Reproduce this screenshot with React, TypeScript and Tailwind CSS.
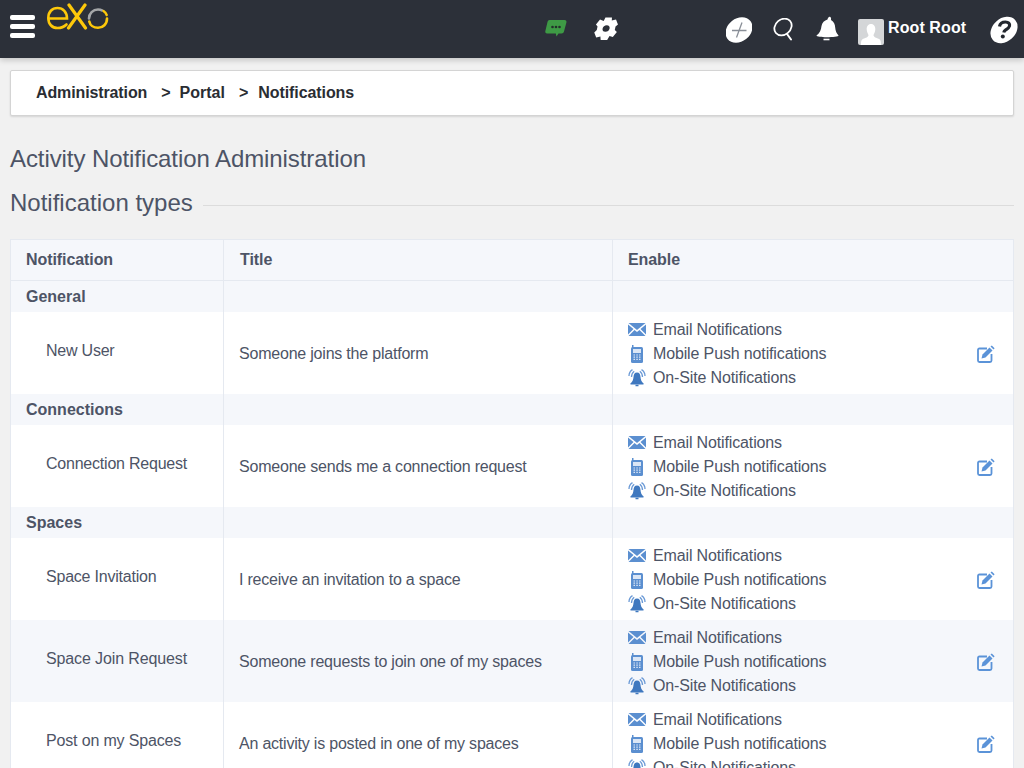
import React from "react";

const Logo = () => (
  <svg width="62" height="28" viewBox="0 0 62 28" fill="none" className="block">
    <path d="M1.500 15.500H20C20 9 16 5 10.500 5C5 5 1.300 9 1.300 15C1.300 21 5 25 10.500 25C14 25 17 24 19.500 21.500" stroke="#fdc80a" strokeWidth="2.600" strokeLinecap="round" />
    <path d="M22 2L38.500 25M38 2L21.500 25" stroke="#fdc80a" strokeWidth="3.200" strokeLinecap="round" />
    <path d="M60 15.500C60 21 56 24.800 51 24.800C46.500 24.800 43 22 42.300 18.500" stroke="#fdc80a" strokeWidth="2.600" strokeLinecap="round" />
    <path d="M42 15.500C42 10.500 46 6.500 51 6.500C52.500 6.500 54 6.800 55 7.400" stroke="#a4a6a8" strokeWidth="2.600" strokeLinecap="round" />
    <path d="M56.500 8C58 9 59.200 10.500 59.700 12" stroke="#fdc80a" strokeWidth="2.400" strokeLinecap="round" />
  </svg>
);

const Hamburger = () => (
  <div className="flex flex-col gap-[4px] w-[25px]">
    <div className="h-[5px] rounded-[2px] bg-white" />
    <div className="h-[5px] rounded-[2px] bg-white" />
    <div className="h-[5px] rounded-[2px] bg-white" />
  </div>
);

const Chat = () => (
  <svg width="22" height="19" viewBox="0 0 22 19" className="block">
    <path d="M4.500 1H19.500C21 1 21.800 2 21.400 3.500L19 12.500C18.700 13.700 17.800 14.500 16.500 14.500H13.500L11.500 17.500L10.800 14.500H2C0.800 14.500 0 13.500 0.300 12.300L2.500 3C2.800 1.800 3.500 1 4.500 1Z" fill="#3e9a45" />
    <circle cx="7.500" cy="8" r="1.300" fill="#22302a" />
    <circle cx="11" cy="8" r="1.300" fill="#22302a" />
    <circle cx="14.500" cy="8" r="1.300" fill="#22302a" />
  </svg>
);

const Gear = () => (
  <svg width="24" height="24" viewBox="0 0 24 24" className="block">
    <g transform="translate(12 12) skewX(-12)">
      <path
        fill="#fff"
        fillRule="evenodd"
        d="M-3 -11.500H3.500L4 -8.500L8 -9.500L11 -4.500L9 -2.500L9 1L11.500 3L8.500 8L5 7L3.500 11H-3L-4 7.500L-8 8.500L-11 3.500L-9 1L-9 -2.500L-11 -4.500L-8 -9.500L-4 -8ZM0 -3.800C-2.200 -3.800 -3.500 -2.200 -3.500 -.5C-3.500 1.500 -2.200 2.800 0 2.800C2.200 2.800 3.500 1.500 3.500 -.5C3.500 -2.200 2.200 -3.800 0 -3.800Z"
      />
    </g>
  </svg>
);

const Plus = () => (
  <svg width="26" height="26" viewBox="0 0 26 26" className="block">
    <ellipse cx="13" cy="13" rx="14.500" ry="11.500" transform="rotate(-38 13 13)" fill="#fff" />
    <path d="M16 5.500L10.500 20.500M6 13.500H20.500" stroke="#8a8f98" strokeWidth="1.300" />
  </svg>
);

const Search = () => (
  <svg width="22" height="24" viewBox="0 0 22 24" fill="none" className="block">
    <ellipse cx="10" cy="9" rx="9.300" ry="7.600" transform="rotate(-40 10 9)" stroke="#fff" strokeWidth="1.800" />
    <path d="M14 16L18 21.500" stroke="#fff" strokeWidth="2" strokeLinecap="round" />
  </svg>
);

const Bell = () => (
  <svg width="24" height="26" viewBox="0 0 24 26" className="block">
    <path d="M0.500 19.500C4 17 5 14 5.500 10C6 6.500 8.500 4.500 11.500 3.500C12 1.500 13 .5 14 .8C15 1.100 15.300 2.500 15 4C18 6 19 8 19.200 11.500C19.400 14.500 20.500 17.500 22.500 19.500C23 21.500 0.500 22 0.500 19.500Z" fill="#fff" />
    <path d="M7.500 23.500H13.500" stroke="#fff" strokeWidth="1.600" />
  </svg>
);

const Avatar = () => (
  <div className="w-[26px] h-[26px] rounded-[2px] bg-[#d4d6d8] overflow-hidden">
    <svg width="26" height="26" viewBox="0 0 26 26" className="block">
      <path d="M13 5C16 5 17.500 7.500 17.300 10.500C17.200 13 16 15 15.500 16C15.500 18 18.500 19 21 20C22.500 20.700 23 22 23 26H3C3 22 3.500 20.700 5 20C7.500 19 10.500 18 10.500 16C10 15 8.800 13 8.700 10.500C8.500 7.500 10 5 13 5Z" fill="#fff" />
    </svg>
  </div>
);

const Help = () => (
  <svg width="28" height="28" viewBox="0 0 28 28" className="block">
    <ellipse cx="14" cy="14" rx="15" ry="11.500" transform="rotate(-42 14 14)" fill="#fff" />
    <path d="M9.500 10.500C10 7.500 12.500 6 15.500 6C18.500 6 20 7.800 19.500 10C19 12 17 13 15.500 14C14.500 14.700 14 15.500 13.800 16.500" fill="none" stroke="#23272e" strokeWidth="3.200" />
    <circle cx="12.800" cy="20.500" r="2" fill="#23272e" />
  </svg>
);

const Mail = () => (
  <svg width="18" height="13" viewBox="0 0 18 13" className="block">
    <path d="M0.500 0H17.500L9 7Z" fill="#5b8fd0" />
    <path d="M0 1.500L5.500 6L0 11.500ZM18 1.500L12.500 6L18 11.500ZM6.500 7L9 9L11.500 7L17.500 13H0.500Z" fill="#5b8fd0" />
  </svg>
);

const Phone = () => (
  <svg width="12" height="18" viewBox="0 0 12 18" className="block">
    <rect x="0" y="2" width="12" height="16" rx="1.500" fill="#5b8fd0" />
    <rect x="1" y="0" width="1.500" height="3" fill="#5b8fd0" />
    <rect x="2" y="4" width="8" height="4" fill="#dbe6f5" />
    <path d="M2.500 10H4M5.300 10H6.800M8 10H9.500M2.500 12.200H4M5.300 12.200H6.800M8 12.200H9.500M2.500 14.400H4M5.300 14.400H6.800M8 14.400H9.500" stroke="#dbe6f5" strokeWidth="1.200" />
  </svg>
);

const AlarmBell = () => (
  <svg width="18" height="18" viewBox="0 0 18 18" fill="none" className="block">
    <path d="M9 3.500C11.500 3.500 12.300 5.500 12.500 8C12.700 10.500 13.500 12.500 15 14H3C4.500 12.500 5.300 10.500 5.500 8C5.700 5.500 6.500 3.500 9 3.500Z" fill="#3f78bf" />
    <rect x="2.500" y="14" width="13" height="1.500" fill="#3f78bf" />
    <path d="M7.500 16.500H10.500" stroke="#3f78bf" strokeWidth="1.500" />
    <path d="M3.500 8C3.500 5.500 4.500 3.500 6.200 2.200M14.500 8C14.500 5.500 13.500 3.500 11.800 2.200M1 7C1 4 2.500 1.800 4.500 .6M17 7C17 4 15.500 1.800 13.500 .6" stroke="#6b9ad6" strokeWidth="1.300" />
  </svg>
);

const Edit = () => (
  <svg width="18" height="18" viewBox="0 0 18 18" fill="none" className="block">
    <path d="M10 3.500H2.500C1.500 3.500 1 4 1 5V15.500C1 16.500 1.500 17 2.500 17H13C14 17 14.500 16.500 14.500 15.500V9" stroke="#5b93d8" strokeWidth="1.800" />
    <path d="M4.500 13.500L5.500 9.500L12.500 2.500L15.500 5.500L8.500 12.500Z" fill="#5b93d8" />
    <path d="M13.500 1.500L14.800 .4L17.600 3.200L16.500 4.500Z" fill="#5b93d8" />
  </svg>
);

const Enable = () => (
  <div className="flex items-center justify-between pl-[15px] pr-[18px] tracking-[-0.14px]">
    <div className="flex flex-col">
      <div className="flex items-center h-[24px]">
        <span className="w-[25px] flex"><Mail /></span>
        <span>Email Notifications</span>
      </div>
      <div className="flex items-center h-[24px]">
        <span className="w-[25px] flex pl-[3px]"><Phone /></span>
        <span>Mobile Push notifications</span>
      </div>
      <div className="flex items-center h-[24px]">
        <span className="w-[25px] flex"><AlarmBell /></span>
        <span>On-Site Notifications</span>
      </div>
    </div>
    <Edit />
  </div>
);

const Group = ({ name }: { name: string }) => (
  <tr className="h-[31px] bg-[#f5f7fb]">
    <td className="pl-[15px] pt-[1px] font-bold border-r border-[#e5e9f0]">{name}</td>
    <td className="border-r border-[#e5e9f0]" />
    <td />
  </tr>
);

const Row = ({
  name,
  title,
  shaded,
  nameClass = "tracking-[-0.22px]",
  height = "h-[82px]",
}: {
  name: string;
  title: string;
  shaded?: boolean;
  nameClass?: string;
  height?: string;
}) => (
  <tr className={`${height} ${shaded ? "bg-[#f5f7fb]" : "bg-white"}`}>
    <td className={`pl-[35px] pb-[4px] border-r border-[#e5e9f0] ${nameClass}`}>{name}</td>
    <td className="pl-[15px] pt-[2px] border-r border-[#e5e9f0] tracking-[-0.21px]">{title}</td>
    <td className="pt-[2px]"><Enable /></td>
  </tr>
);

export default function App() {
  return (
    <div className="h-screen overflow-hidden bg-[#f1f1f1] font-['Liberation_Sans',Arial,sans-serif] text-[#4d5466]">
      <header className="h-[58px] bg-[#2c3039] flex shadow-[0_2px_6px_rgba(0,0,0,0.2)] text-white">
        <div className="ml-[10px] mt-[15px]"><Hamburger /></div>
        <div className="ml-[12px] mt-[3px]"><Logo /></div>
        <div className="ml-[436px] mt-[19px]"><Chat /></div>
        <div className="ml-[27px] mt-[17px]"><Gear /></div>
        <div className="ml-[108px] mt-[17px]"><Plus /></div>
        <div className="ml-[21px] mt-[18px]"><Search /></div>
        <div className="ml-[21px] mt-[16px]"><Bell /></div>
        <div className="ml-[18px] mt-[19px]"><Avatar /></div>
        <div className="ml-[4px] mt-[18px] text-[16px] leading-[20px] font-bold whitespace-nowrap tracking-[0.1px]">Root Root</div>
        <div className="ml-[24px] mt-[16px]"><Help /></div>
      </header>

      <main className="px-[10px]">
        <nav className="mt-[12px] h-[46px] bg-white border border-[#d4d4d4] rounded-[2px] shadow-[0_1px_2px_rgba(0,0,0,0.12)] flex items-center pl-[25px] pb-[1px] text-[16px] font-bold text-[#2a2d33]">
          <span className="tracking-[-0.12px]">Administration</span>
          <span className="ml-[14px]">&gt;</span>
          <span className="ml-[9px]">Portal</span>
          <span className="ml-[14px]">&gt;</span>
          <span className="ml-[10px] tracking-[-0.08px]">Notifications</span>
        </nav>

        <h1 className="mt-[28px] text-[24px] leading-[30px] font-normal tracking-[-0.08px]">Activity Notification Administration</h1>

        <div className="mt-[14px] flex items-center">
          <h2 className="text-[24px] leading-[30px] font-normal whitespace-nowrap">Notification types</h2>
          <div className="ml-[10px] flex-1 h-px bg-[#dcdcdc] mt-[5px]" />
        </div>

        <table className="mt-[21px] w-[1004px] table-fixed border-collapse border border-[#e5e9f0] text-[16px]">
          <colgroup>
            <col className="w-[213px]" />
            <col className="w-[389px]" />
            <col />
          </colgroup>
          <thead>
            <tr className="h-[41px] bg-[#f5f7fb] border-b border-[#e5e9f0] text-left tracking-[-0.08px]">
              <th className="pl-[15px] pb-[1px] font-bold border-r border-[#e5e9f0]">Notification</th>
              <th className="pl-[16px] pb-[1px] font-bold border-r border-[#e5e9f0]">Title</th>
              <th className="pl-[15px] pb-[1px] font-bold">Enable</th>
            </tr>
          </thead>
          <tbody>
            <Group name="General" />
            <Row name="New User" title="Someone joins the platform" />
            <Group name="Connections" />
            <Row name="Connection Request" title="Someone sends me a connection request" />
            <Group name="Spaces" />
            <Row name="Space Invitation" title="I receive an invitation to a space" />
            <Row name="Space Join Request" title="Someone requests to join one of my spaces" shaded nameClass="tracking-[-0.12px]" />
            <Row name="Post on my Spaces" title="An activity is posted in one of my spaces" nameClass="tracking-[-0.16px]" height="h-[83px]" />
          </tbody>
        </table>
      </main>
    </div>
  );
}
